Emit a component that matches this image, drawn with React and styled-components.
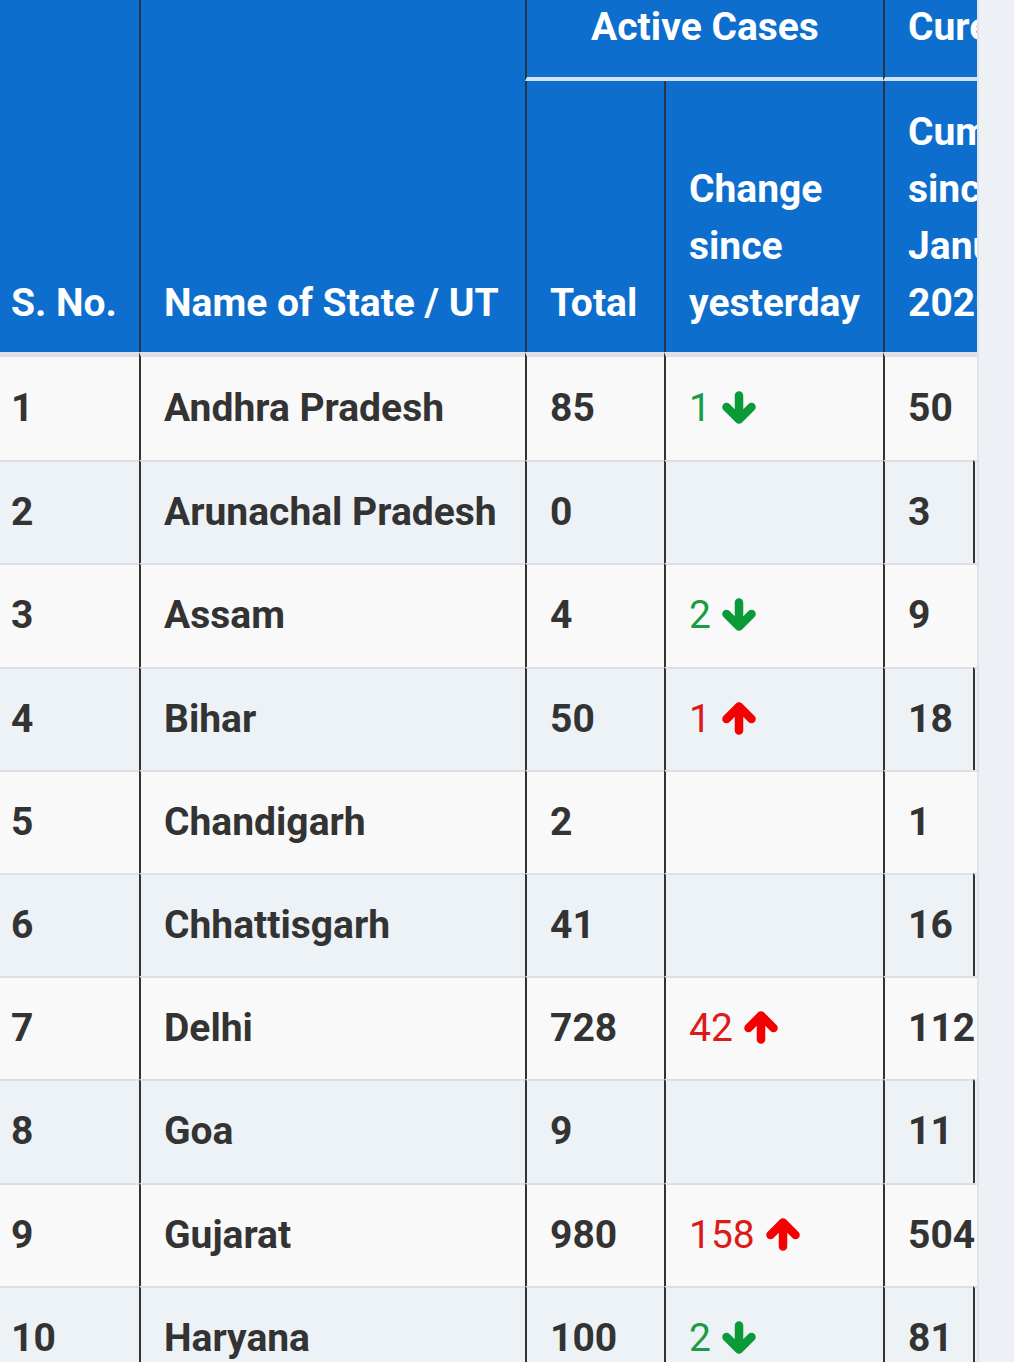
import React from "react";
import styled, { createGlobalStyle } from "styled-components";

const Global = createGlobalStyle`
  html, body {
    margin: 0;
    padding: 0;
    height: 100%;
    overflow: hidden;
    background: #edf1f6;
  }
  body {
    font-family: Roboto, "Liberation Sans", Arial, sans-serif;
  }
`;

const Page = styled.div`
  width: 977px;
  overflow: hidden;
  border-right: 2px solid #e0e4e9;
  box-sizing: content-box;
`;

const Table = styled.table`
  table-layout: fixed;
  border-collapse: separate;
  border-spacing: 0;
  width: 1200px;
  font-size: 39px;
  font-weight: 700;
  color: #333333;
`;

const HeadCell = styled.th`
  box-sizing: border-box;
  background: #0e6ecd;
  color: #ffffff;
  font-weight: 700;
  text-align: ${(p) => p.$align || "left"};
  vertical-align: ${(p) => p.$valign || "bottom"};
  white-space: normal;
  line-height: 57px;
  padding: ${(p) => p.$pad || "23px 23px 20px"};
  border-left: ${(p) => (p.$first || p.$ghost ? "none" : "2px solid #24364a")};
  border-bottom: ${(p) => (p.$rule ? "4px solid #d3e2f2" : "none")};
`;

const GroupCell = styled(HeadCell)`
  line-height: 54px;
  height: 77px;
  padding: 0 23px 23px;
  vertical-align: top;
`;

const Row = styled.tr`
  background: ${(p) => (p.$even ? "#edf2f7" : "#f9f9f9")};
`;

const Cell = styled.td`
  box-sizing: border-box;
  line-height: 57px;
  padding: ${(p) => (p.$top ? "23.1px" : "22.1px")} 0 ${(p) => (p.$top ? "23.1px" : "22.1px")}
    ${(p) => (p.$first ? "11px" : "23px")};
  white-space: nowrap;
  vertical-align: middle;
  border-top: ${(p) => (p.$top ? "5px solid #dde1e6" : "2px solid #dcdfe3")};
  border-left: ${(p) =>
    p.$first ? "none" : p.$ghost ? (p.$even ? "2px solid #333" : "none") : "2px solid #333"};
`;

const Change = styled.span`
  font-weight: 400;
  color: ${(p) => (p.$up ? "#dd1a1a" : "#1c9b45")};
`;

const ArrowIcon = styled.svg`
  width: 34px;
  height: 33px;
  margin-left: 11px;
  vertical-align: -3px;
  stroke: ${(p) => (p.$up ? "#f40000" : "#0a9a38")};
  fill: none;
  stroke-width: 8.5;
  stroke-linecap: round;
  stroke-linejoin: round;
`;

const Arrow = ({ up }) => (
  <ArrowIcon $up={up} viewBox="0 0 34 33" aria-hidden="true">
    {up ? (
      <path d="M17 28.5V5M4.5 17L17 4.5L29.5 17" />
    ) : (
      <path d="M17 4.5V28M4.5 16L17 28.5L29.5 16" />
    )}
  </ArrowIcon>
);

const rows = [
  ["1", "Andhra Pradesh", "85", 1, "down", "50"],
  ["2", "Arunachal Pradesh", "0", null, null, "3"],
  ["3", "Assam", "4", 2, "down", "9"],
  ["4", "Bihar", "50", 1, "up", "18"],
  ["5", "Chandigarh", "2", null, null, "1"],
  ["6", "Chhattisgarh", "41", null, null, "16"],
  ["7", "Delhi", "728", 42, "up", "112"],
  ["8", "Goa", "9", null, null, "11"],
  ["9", "Gujarat", "980", 158, "up", "504"],
  ["10", "Haryana", "100", 2, "down", "81"],
];

export default function App() {
  return (
    <>
      <Global />
      <Page>
        <Table>
          <colgroup>
            <col style={{ width: 139 }} />
            <col style={{ width: 386 }} />
            <col style={{ width: 139 }} />
            <col style={{ width: 219 }} />
            <col style={{ width: 90 }} />
            <col style={{ width: 227 }} />
          </colgroup>
          <thead>
            <tr>
              <HeadCell rowSpan={2} $first $pad="0 0 20px 11px">
                S. No.
              </HeadCell>
              <HeadCell rowSpan={2}>Name of State / UT</HeadCell>
              <GroupCell colSpan={2} $align="center" $rule>
                Active Cases
              </GroupCell>
              <GroupCell colSpan={2} $rule>
                Cured/Discharged/Migrated
              </GroupCell>
            </tr>
            <tr>
              <HeadCell>Total</HeadCell>
              <HeadCell>Change since yesterday</HeadCell>
              <HeadCell>Cumulative since January 2020</HeadCell>
              <HeadCell $ghost>Change since yesterday</HeadCell>
            </tr>
          </thead>
          <tbody>
            {rows.map(([sn, name, total, chg, dir, cured], i) => {
              const even = i % 2 === 1;
              const top = i === 0;
              return (
                <Row key={sn} $even={even}>
                  <Cell $first $top={top}>{sn}</Cell>
                  <Cell $top={top}>{name}</Cell>
                  <Cell $top={top}>{total}</Cell>
                  <Cell $top={top}>
                    {chg !== null && (
                      <Change $up={dir === "up"}>
                        {chg}
                        <Arrow up={dir === "up"} />
                      </Change>
                    )}
                  </Cell>
                  <Cell $top={top}>{cured}</Cell>
                  <Cell $top={top} $ghost $even={even}></Cell>
                </Row>
              );
            })}
          </tbody>
        </Table>
      </Page>
    </>
  );
}
